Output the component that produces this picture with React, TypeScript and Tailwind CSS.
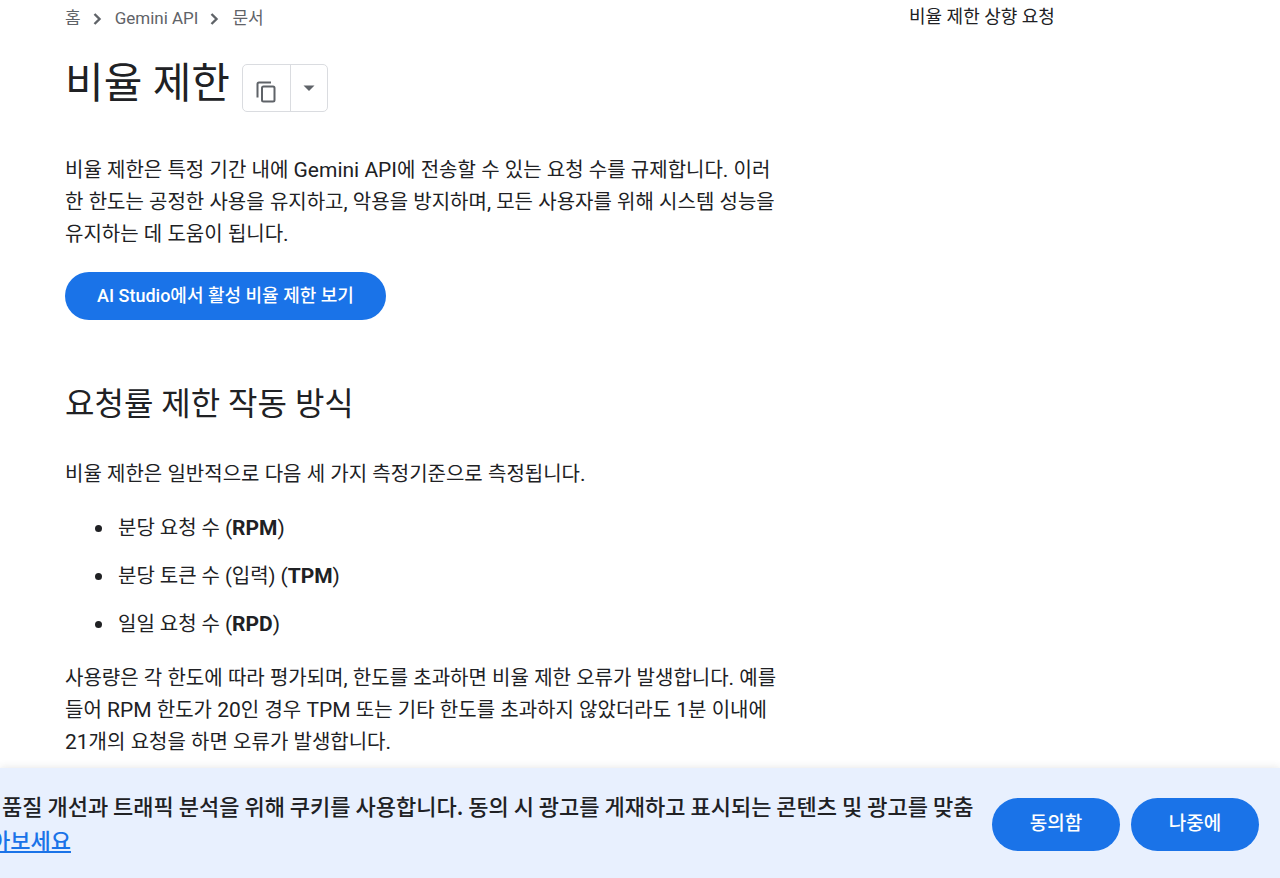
import type { ReactNode } from "react";

function Chevron() {
  return (
    <svg viewBox="0 0 20 20" className="size-5 shrink-0 fill-none stroke-[#5f6368] stroke-[2.4]" aria-hidden="true">
      <path d="M6.500 5l5 5-5 5" />
    </svg>
  );
}

// Hangul is set one step smaller than the Latin text, digits and spaces around it.
function Mixed({ text }: { text: string }) {
  return text.split(/([가-힣]+)/).map((run, i) => (
    <span key={i} className={i % 2 ? "text-[20px]" : "text-[21px]"}>{run}</span>
  ));
}

function Paragraph({ lines }: { lines: string[] }) {
  return (
    <p className="text-xl leading-8 whitespace-nowrap">
      {lines.map((line) => (
        <span key={line} className="block h-8 leading-8">
          <Mixed text={line} />
        </span>
      ))}
    </p>
  );
}

function Metric({ children, code }: { children: ReactNode; code: string }) {
  return (
    <li className="flex h-8 items-center gap-4 before:size-[7px] before:rounded-full before:bg-[#202124]">
      <span>
        {children} <span className="text-[21px]">(<strong className="font-bold">{code}</strong>)</span>
      </span>
    </li>
  );
}

const intro = [
  "비율 제한은 특정 기간 내에 Gemini API에 전송할 수 있는 요청 수를 규제합니다. 이러",
  "한 한도는 공정한 사용을 유지하고, 악용을 방지하며, 모든 사용자를 위해 시스템 성능을",
  "유지하는 데 도움이 됩니다.",
];

const usage = [
  "사용량은 각 한도에 따라 평가되며, 한도를 초과하면 비율 제한 오류가 발생합니다. 예를",
  "들어 RPM 한도가 20인 경우 TPM 또는 기타 한도를 초과하지 않았더라도 1분 이내에",
  "21개의 요청을 하면 오류가 발생합니다.",
];

export default function App() {
  return (
    <div className="relative h-screen overflow-hidden bg-white font-[Roboto,'Noto_Sans_CJK_KR',sans-serif] text-[#202124]">
      <div className="flex px-[65px]">
        <main className="w-[720px] shrink-0">
          <nav aria-label="탐색경로" className="flex h-[38px] items-center gap-[7px] text-[17px] text-[#5f6368]">
            <a href="#home">홈</a>
            <Chevron />
            <a href="#gemini">Gemini API</a>
            <Chevron />
            <a href="#docs">문서</a>
          </nav>
          <div className="mt-[14px] flex h-16 items-center gap-3">
            <h1 className="text-[42px] leading-[64px]">비율 제한</h1>
            <div className="mt-2 flex h-12 rounded-[5px] border border-[#dadce0]">
              <button aria-label="페이지 복사" className="flex w-12 items-center justify-center border-r border-[#dadce0]">
                <svg viewBox="0 0 24 24" className="mt-2 size-6 fill-none stroke-[#5f6368] stroke-2">
                  <path d="M3.500 17.500V4q0-1.500 1.500-1.500h12" />
                  <rect x="8" y="6.500" width="12.500" height="15" rx="1.500" />
                </svg>
              </button>
              <button aria-label="옵션 더보기" className="flex w-9 items-center justify-center">
                <svg viewBox="0 0 24 24" className="size-6 fill-[#5f6368]">
                  <path d="M6.500 9.500l5.500 5.500 5.500-5.500z" />
                </svg>
              </button>
            </div>
          </div>
          <div className="pt-[38px]">
            <Paragraph lines={intro} />
          </div>
          <a href="#limits" className="mt-[22px] inline-flex h-12 items-center rounded-full bg-[#1a73e8] px-8 text-lg font-medium text-white">
            AI Studio에서 활성 비율 제한 보기
          </a>
          <h2 className="mt-16 text-[32px] leading-10">요청률 제한 작동 방식</h2>
          <div className="mt-[34px]">
            <Paragraph lines={["비율 제한은 일반적으로 다음 세 가지 측정기준으로 측정됩니다."]} />
          </div>
          <ul className="my-[22px] flex flex-col gap-4 pl-[30px] text-xl leading-8">
            <Metric code="RPM">분당 요청 수</Metric>
            <Metric code="TPM">분당 토큰 수 (입력)</Metric>
            <Metric code="RPD">일일 요청 수</Metric>
          </ul>
          <Paragraph lines={usage} />
        </main>
        <aside className="ml-[124px] pt-[5px]">
          <a href="#request" className="text-lg leading-6 whitespace-nowrap">비율 제한 상향 요청</a>
        </aside>
      </div>
      <section aria-label="쿠키 동의" className="absolute inset-x-0 bottom-0 flex h-[110px] items-center justify-between bg-[#e8f0fe] pr-[21px] shadow-[0_0_8px_rgba(60,64,67,0.15)]">
        <p className="pb-[2px] font-['Noto_Sans_CJK_KR',sans-serif] text-[22px] leading-[34px] font-medium whitespace-nowrap">
          <span className="block pl-[2px]">품질 개선과 트래픽 분석을 위해 쿠키를 사용합니다. 동의 시 광고를 게재하고 표시되는 콘텐츠 및 광고를 맞춤</span>
          <a href="#learn" className="-ml-[10px] text-[#1a73e8] underline">아보세요</a>
        </p>
        <div className="flex gap-[11px] pt-[2px]">
          <button className="h-[53px] w-32 rounded-full bg-[#1a73e8] text-[19px] font-medium text-white">동의함</button>
          <button className="h-[53px] w-32 rounded-full bg-[#1a73e8] text-[19px] font-medium text-white">나중에</button>
        </div>
      </section>
    </div>
  );
}
